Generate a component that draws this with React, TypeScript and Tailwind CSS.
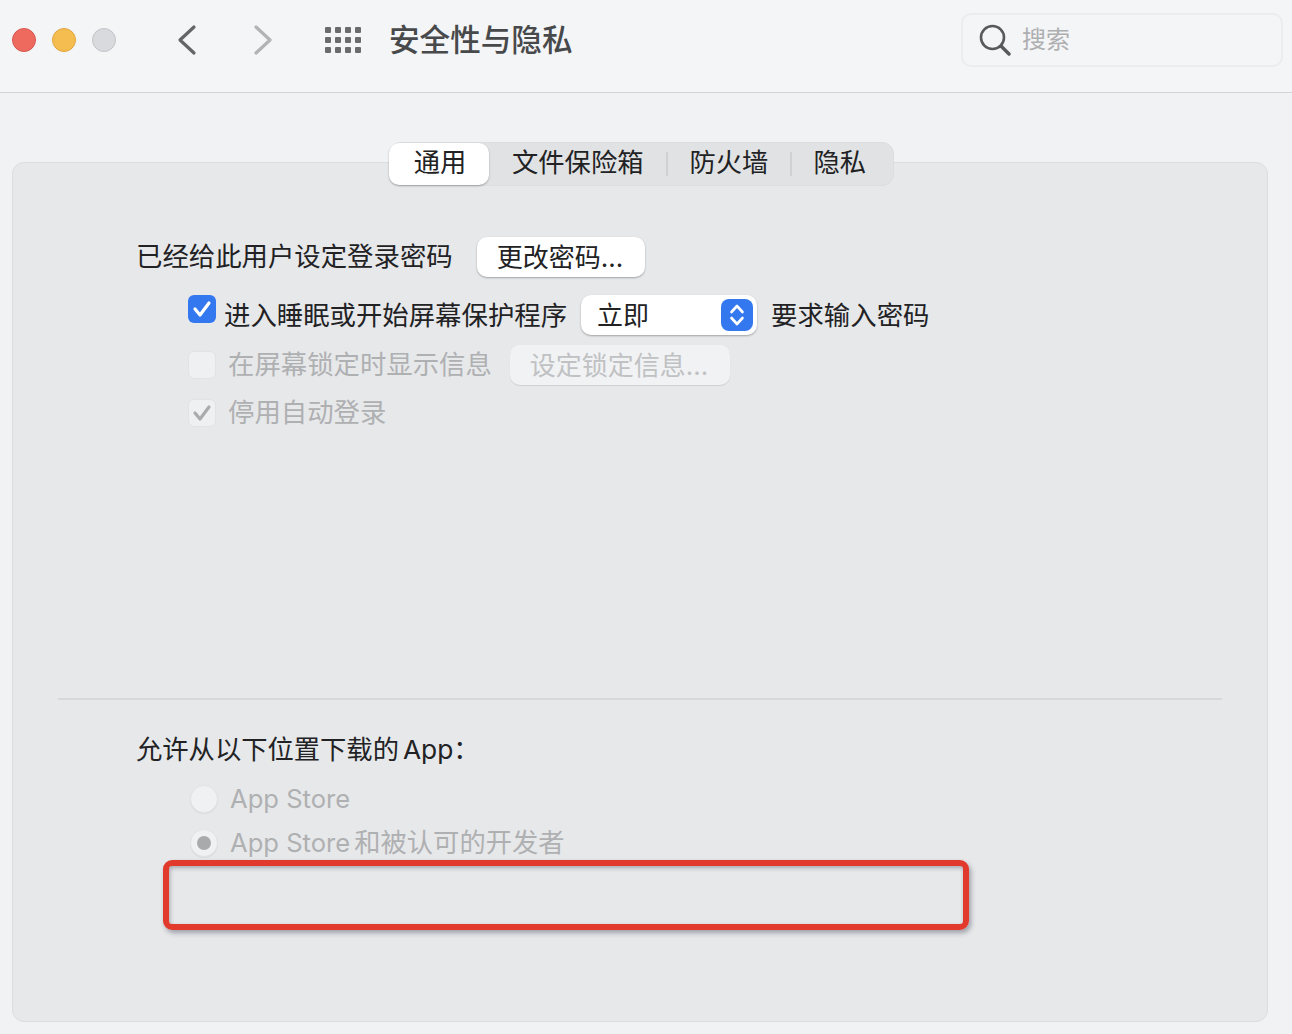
const font = "font-['Inter','Noto_Sans_CJK_SC',sans-serif]";

function Toolbar() {
  return (
    <header className="h-[93px] border-b border-[#d3d4d6] bg-[#f4f5f7]">
      <div className="flex h-[80px] w-full items-center">
        <div className="ml-3 flex gap-4">
          <span className="h-6 w-6 rounded-full border border-[#d9564f] bg-[#ee6a5f]" />
          <span className="h-6 w-6 rounded-full border border-[#dfa63f] bg-[#f5bd4f]" />
          <span className="h-6 w-6 rounded-full border border-[#c4c5c8] bg-[#d9dadd]" />
        </div>
        <svg className="ml-[60px]" width="22" height="32" viewBox="0 0 22 32" fill="none">
          <path d="M18 3 L4 16 L18 29" stroke="#646566" strokeWidth="3.2" strokeLinecap="round" strokeLinejoin="round" />
        </svg>
        <svg className="ml-[54px]" width="22" height="32" viewBox="0 0 22 32" fill="none">
          <path d="M4 3 L18 16 L4 29" stroke="#b2b3b5" strokeWidth="3.2" strokeLinecap="round" strokeLinejoin="round" />
        </svg>
        <div className="ml-[51px] grid grid-cols-4 gap-x-[4px] gap-y-[4px]">
          {Array.from({ length: 12 }).map((_, i) => (
            <span key={i} className="h-[6px] w-[6px] rounded-[1px] bg-[#6a6b6d]" />
          ))}
        </div>
        <h1 className="ml-[28px] text-[30.6px] leading-none font-medium text-[#48494b]">安全性与隐私</h1>
        <div className="mr-[9px] ml-auto flex h-[54px] w-[322px] items-center rounded-[10px] border-2 border-[#ebecee] bg-[#f4f5f7] pl-4">
          <svg width="32" height="32" viewBox="0 0 32 32" fill="none">
            <circle cx="13.5" cy="13.5" r="11.5" stroke="#58595b" strokeWidth="2.6" />
            <path d="M22 22 L30 30" stroke="#58595b" strokeWidth="3.4" strokeLinecap="round" />
          </svg>
          <span className="ml-[11px] text-2xl text-[#aeafb1]">搜索</span>
        </div>
      </div>
    </header>
  );
}

function Tabs() {
  return (
    <div className="mt-[-21px] ml-[376px] flex h-11 w-[505px] items-center rounded-xl border border-[#dcdddf] bg-[#e1e2e4] text-[26.3px] text-[#222224]">
      <div className="ml-[-1px] flex h-[42px] w-[100px] items-center justify-center rounded-[10px] bg-white pb-[2px] pl-[2px] shadow-[0_1px_2px_rgba(0,0,0,0.3)]">通用</div>
      <span className="ml-[23px] pb-[2px]">文件保险箱</span>
      <span className="ml-[23px] h-[24px] w-[2px] bg-[#d0d1d3]" />
      <span className="ml-[21px] pb-[2px]">防火墙</span>
      <span className="ml-[22px] h-[24px] w-[2px] bg-[#d0d1d3]" />
      <span className="ml-[21px] pb-[2px]">隐私</span>
    </div>
  );
}

function Check({ muted }: { muted?: boolean }) {
  return (
    <svg width="20" height="20" viewBox="0 0 20 20" fill="none">
      <path d="M3 10 L8 16 L17 4" stroke={muted ? '#aaabad' : '#ffffff'} strokeWidth="3.2" strokeLinecap="round" strokeLinejoin="round" />
    </svg>
  );
}

function Radio({ selected }: { selected?: boolean }) {
  return (
    <span className="flex h-7 w-7 items-center justify-center rounded-full border border-[#e2e3e5] bg-[#f0f1f3] shadow-[0_1px_1px_rgba(0,0,0,0.06)]">
      {selected && <span className="h-[14px] w-[14px] rounded-full bg-[#a9aaac]" />}
    </span>
  );
}

export default function App() {
  return (
    <div className={`h-[1034px] w-[1292px] overflow-hidden bg-[#f1f2f4] ${font}`}>
      <Toolbar />
      <main className="mt-[69px] ml-3 h-[860px] w-[1256px] rounded-xl border border-[#dcdddf] bg-[#e7e8ea]">
        <Tabs />

        {/* password rows */}
        <div className="mt-[51px] ml-[123px] flex h-10 items-center text-[26.4px] text-[#222224]">
          <span>已经给此用户设定登录密码</span>
          <button className="ml-[24px] h-10 w-[168px] rounded-[10px] bg-white pl-[3px] text-left text-[26px] shadow-[0_1px_2px_rgba(0,0,0,0.3)]">
            <span className="ml-[17px]">更改密码...</span>
          </button>
        </div>

        <div className="mt-[18px] ml-[175px] flex h-10 items-start text-[26.4px] text-[#222224]">
          <span className="flex h-7 w-7 items-center justify-center rounded-md bg-[#3478f0]">
            <Check />
          </span>
          <span className="ml-2 leading-[40px]">进入睡眠或开始屏幕保护程序</span>
          <div className="ml-[14px] flex h-10 w-[176px] items-center rounded-[10px] bg-white pl-4 text-[26px] shadow-[0_1px_2px_rgba(0,0,0,0.3)]">
            立即
            <span className="mr-[4px] ml-auto flex h-8 w-8 items-center justify-center rounded-lg bg-[#3478f0]">
              <svg width="18" height="26" viewBox="0 0 18 26" fill="none">
                <path d="M3.5 10 L9 4 L14.500 10 M3.5 16 L9 22 L14.500 16" stroke="#ffffff" strokeWidth="2.6" strokeLinecap="round" strokeLinejoin="round" />
              </svg>
            </span>
          </div>
          <span className="ml-[14px] leading-[40px]">要求输入密码</span>
        </div>

        <div className="mt-[10px] ml-[175px] flex h-10 items-center text-[26.4px] text-[#afb0b2]">
          <span className="h-7 w-7 rounded-md border border-[#e2e3e5] bg-[#eff0f2]" />
          <span className="ml-3">在屏幕锁定时显示信息</span>
          <button className="ml-[18px] h-10 w-[220px] rounded-[10px] bg-[#f1f2f4] pr-[2px] text-[26px] text-[#c0c1c3] shadow-[0_1px_1px_rgba(0,0,0,0.1)]">设定锁定信息...</button>
        </div>

        <div className="mt-2 ml-[175px] flex h-10 items-center text-[26.4px] text-[#afb0b2]">
          <span className="flex h-7 w-7 items-center justify-center rounded-md border border-[#e2e3e5] bg-[#eff0f2]">
            <Check muted />
          </span>
          <span className="ml-3">停用自动登录</span>
        </div>

        <div className="mt-[265px] ml-[45px] h-[2px] w-[1164px] bg-[#d7d8da]" />

        {/* download source */}
        <div className="mt-[32px] ml-[123px] h-9 text-[26.3px] leading-9 text-[#222224]">
          允许从以下位置下载的<span className="ml-1">App：</span>
        </div>

        <div className="mt-[17px] ml-[177px] flex h-7 items-center text-[25.6px] text-[#afb0b2]">
          <Radio />
          <span className="ml-3">App Store</span>
        </div>
        <div className="mt-4 ml-[177px] flex h-7 items-center text-[26.3px] text-[#afb0b2]">
          <Radio selected />
          <span className="ml-3">
            <span className="mr-1 text-[25.6px]">App Store</span>和被认可的开发者
          </span>
        </div>

        <div className="mt-[3px] ml-[150px] h-[70px] w-[806px] rounded-[9px] border-[6px] border-[#e13a2d] shadow-[2px_3px_5px_rgba(70,70,90,0.45),inset_1px_2px_4px_rgba(70,70,90,0.4)]" />
      </main>
    </div>
  );
}
